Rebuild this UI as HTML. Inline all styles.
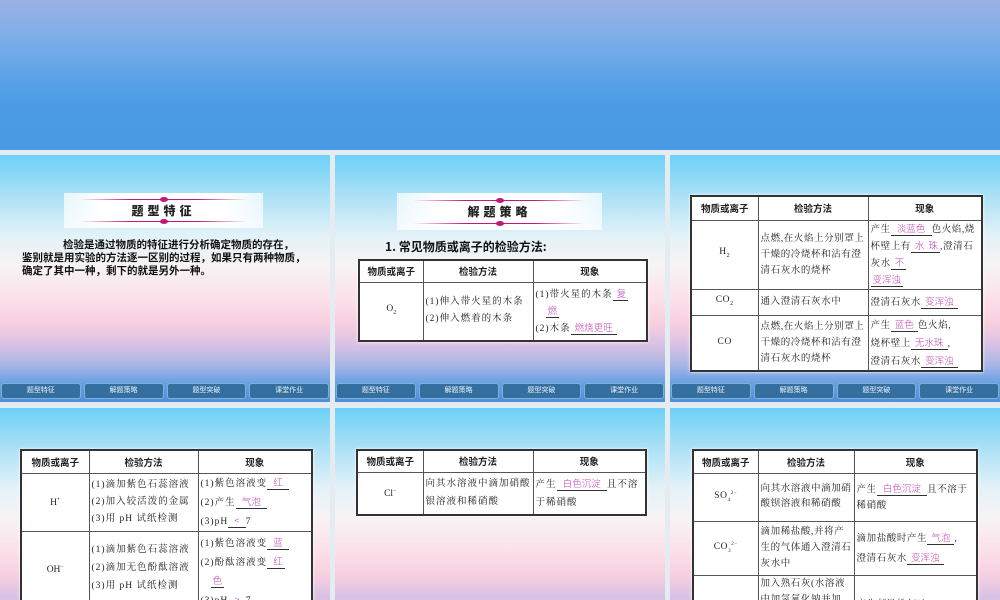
<!DOCTYPE html>
<html><head><meta charset="utf-8"><style>
*{margin:0;padding:0;box-sizing:border-box}
html{width:1000px;height:600px;overflow:hidden}
body{width:1000px;height:600px;overflow:hidden;background:#e4ecf2;position:relative;font-family:"Liberation Serif","Noto Serif CJK SC",serif}
.top{position:absolute;left:0;top:0;width:1000px;height:150px;background:linear-gradient(#9cb1e4 0%,#7eaee8 25%,#5ea3e7 50%,#4a9be3 70%,#479ae3 100%)}
.s{position:absolute;width:330px;height:247px;overflow:hidden;background:linear-gradient(#6cd0f7 0%,#a6dff6 15%,#e4f2f8 33%,#f7f3f5 45%,#fbe1ea 58%,#f8cfe0 68%,#d8c2e4 77%,#a9b5e6 85%,#6aa2e2 92%,#4a90d8 100%)}
.s.b{height:192px;background:linear-gradient(#6cd0f7 0%,#a6dff6 19%,#e4f2f8 42%,#f7f3f5 57%,#fbe1ea 74%,#f8cfe0 87%,#d8c2e4 98%)}
.nav{position:absolute;left:0;top:228px;width:330px;height:16px;display:flex;gap:3px;padding:0 1px}
.nav div{flex:1;background:#356f9f;border:1px solid #7fb0d8;border-radius:3px;color:#e8f0f8;font-size:7px;text-align:center;line-height:13px;font-family:"Liberation Sans","Noto Sans CJK SC",sans-serif}
.ban{position:absolute;background:linear-gradient(90deg,rgba(255,255,255,.7),#fff 20%,#fff 80%,rgba(255,255,255,.7));text-align:center;font-family:"Noto Sans CJK SC",sans-serif;font-weight:900;font-size:12px;letter-spacing:4px;color:#222}
.ban i{position:absolute;left:8%;right:8%;height:1px;background:linear-gradient(90deg,transparent,#c2187a 30%,#c2187a 70%,transparent)}
.ban b{position:absolute;left:50%;width:8px;height:5px;margin-left:-4px;border-radius:50%;background:#c2187a}
table{position:absolute;border-collapse:collapse;background:#fff;font-size:9.5px;color:#222;box-shadow:0 0 3px #fff;border:2px solid #333;font-family:"Liberation Serif","Noto Serif CJK SC",serif}
td{border:1px solid #555;padding:0 2px;line-height:15px;vertical-align:middle;letter-spacing:1px}
th{border:1px solid #555;font-family:"Noto Sans CJK SC",sans-serif;font-size:9.5px;text-align:center;font-weight:bold}
.c{text-align:center;letter-spacing:0}
u{color:#c040b0;text-decoration:none;border-bottom:1px solid #333;padding:0 2px;font-family:"Noto Sans CJK SC",sans-serif;font-weight:300;letter-spacing:0}
.p{position:absolute;font-family:"Noto Sans CJK SC",sans-serif;font-size:10.5px;font-weight:700;color:#111;line-height:13px;white-space:nowrap}
.t td{letter-spacing:.6px}
</style></head><body>
<div class="top"></div>

<div class="s" style="left:0;top:155px">
<div class="ban" style="left:64px;top:38px;width:199px;height:35px;line-height:35px"><i style="top:6px"></i><b style="top:4px"></b><i style="top:28px"></i><b style="top:26px"></b>题型特征</div>
<div class="p" style="left:22px;top:83px;width:300px"><span style="padding-left:41px"></span>检验是通过物质的特征进行分析确定物质的存在，<br>鉴别就是用实验的方法逐一区别的过程，如果只有两种物质，<br>确定了其中一种，剩下的就是另外一种。</div>
<div class="nav"><div>题型特征</div><div>解题策略</div><div>题型突破</div><div>课堂作业</div></div>
</div>

<div class="s" style="left:335px;top:155px">
<div class="ban" style="left:62px;top:38px;width:205px;height:37px;line-height:37px"><i style="top:7px"></i><b style="top:5px"></b><i style="top:30px"></i><b style="top:28px"></b>解题策略</div>
<div class="p" style="left:50px;top:85px;font-size:12px">1. 常见物质或离子的检验方法:</div>
<table style="left:23px;top:104px;width:290px;height:83px">
<tr style="height:22px"><th style="width:64px">物质或离子</th><th style="width:110px">检验方法</th><th>现象</th></tr>
<tr><td class="c">O<sub style="font-size:6px">2</sub></td><td style="line-height:17px">(1)伸入带火星的木条<br>(2)伸入燃着的木条</td><td>(1)带火星的木条<u>&nbsp;复</u><br>&nbsp;&nbsp;&nbsp;<u>燃</u><br>(2)木条<u>&nbsp;燃烧更旺&nbsp;</u></td></tr>
</table>
<div class="nav"><div>题型特征</div><div>解题策略</div><div>题型突破</div><div>课堂作业</div></div>
</div>

<div class="s" style="left:670px;top:155px">
<table class="t" style="left:20px;top:40px;width:293px;height:173px">
<tr style="height:24px"><th style="width:67px">物质或离子</th><th style="width:110px">检验方法</th><th>现象</th></tr>
<tr style="height:68px"><td class="c">H<sub style="font-size:6px">2</sub></td><td style="line-height:16px">点燃,在火焰上分别罩上干燥的冷烧杯和沾有澄清石灰水的烧杯</td><td style="line-height:15px">产生<u>&nbsp;&nbsp;淡蓝色&nbsp;&nbsp;</u>色火焰,烧杯壁上有<u>&nbsp;水</u><u>珠</u>,澄清石灰水<u>&nbsp;不</u><br><u>变浑浊</u></td></tr>
<tr style="height:26px"><td class="c">CO<sub style="font-size:6px">2</sub></td><td>通入澄清石灰水中</td><td>澄清石灰水<u>&nbsp;变浑浊&nbsp;</u></td></tr>
<tr><td class="c">CO</td><td style="line-height:16px">点燃,在火焰上分别罩上干燥的冷烧杯和沾有澄清石灰水的烧杯</td><td style="line-height:16px">产生<u>&nbsp;蓝色&nbsp;</u>色火焰,<br>烧杯壁上<u>&nbsp;无水珠&nbsp;</u>,<br>澄清石灰水<u>&nbsp;变浑浊&nbsp;</u></td></tr>
</table>
<div class="nav"><div>题型特征</div><div>解题策略</div><div>题型突破</div><div>课堂作业</div></div>
</div>

<div class="s b" style="left:0;top:408px">
<table style="left:20px;top:41px;width:293px;height:200px">
<tr style="height:23px"><th style="width:68px">物质或离子</th><th style="width:109px">检验方法</th><th>现象</th></tr>
<tr style="height:55px"><td class="c">H<sup style="font-size:6px">+</sup></td><td style="line-height:17px">(1)滴加紫色石蕊溶液<br>(2)加入较活泼的金属<br>(3)用 pH 试纸检测</td><td style="line-height:17px">(1)紫色溶液变<u>&nbsp;&nbsp;红&nbsp;&nbsp;</u><br>(2)产生<u>&nbsp;&nbsp;气泡&nbsp;&nbsp;</u><br>(3)pH<u>&nbsp;&nbsp;&lt;&nbsp;&nbsp;</u>7</td></tr>
<tr><td class="c" style="vertical-align:top;padding-top:28px">OH<sup style="font-size:6px">−</sup></td><td style="line-height:18px;vertical-align:top;padding-top:9px">(1)滴加紫色石蕊溶液<br>(2)滴加无色酚酞溶液<br>(3)用 pH 试纸检测</td><td style="line-height:17px;vertical-align:top;padding-top:2px">(1)紫色溶液变<u>&nbsp;&nbsp;蓝&nbsp;&nbsp;</u><br>(2)酚酞溶液变<u>&nbsp;&nbsp;红</u><br>&nbsp;&nbsp;&nbsp;<u>色</u><br>(3)pH<u>&nbsp;&nbsp;&gt;&nbsp;&nbsp;</u>7</td></tr>
</table>
</div>

<div class="s b" style="left:335px;top:408px">
<table style="left:21px;top:41px;width:291px;height:67px">
<tr style="height:22px"><th style="width:66px">物质或离子</th><th style="width:110px">检验方法</th><th>现象</th></tr>
<tr><td class="c">Cl<sup style="font-size:6px">−</sup></td><td style="line-height:18px">向其水溶液中滴加硝酸银溶液和稀硝酸</td><td style="line-height:18px">产生<u>&nbsp;&nbsp;白色沉淀&nbsp;&nbsp;</u>且不溶于稀硝酸</td></tr>
</table>
</div>

<div class="s b" style="left:670px;top:408px">
<table class="t" style="left:22px;top:41px;width:286px;height:200px">
<tr style="height:23px"><th style="width:65px">物质或离子</th><th style="width:96px">检验方法</th><th>现象</th></tr>
<tr style="height:48px"><td class="c">SO<sub style="font-size:5px">4</sub><sup style="font-size:5px">2−</sup></td><td style="line-height:15px">向其水溶液中滴加硝酸钡溶液和稀硝酸</td><td style="line-height:16px">产生<u>&nbsp;&nbsp;白色沉淀&nbsp;&nbsp;</u>且不溶于稀硝酸</td></tr>
<tr style="height:54px"><td class="c">CO<sub style="font-size:5px">3</sub><sup style="font-size:5px">2−</sup></td><td style="line-height:16px">滴加稀盐酸,并将产生的气体通入澄清石灰水中</td><td style="line-height:18px">滴加盐酸时产生<u>&nbsp;气泡&nbsp;</u>,<br>澄清石灰水<u>&nbsp;变浑浊&nbsp;</u></td></tr>
<tr><td class="c" style="vertical-align:top;padding-top:22px">NH<sub style="font-size:5px">4</sub><sup style="font-size:5px">+</sup></td><td style="vertical-align:top;line-height:16px">加入熟石灰(水溶液中加氢氧化钠并加热)</td><td style="vertical-align:top;padding-top:22px">产生刺激性气味</td></tr>
</table>
</div>
</body></html>
